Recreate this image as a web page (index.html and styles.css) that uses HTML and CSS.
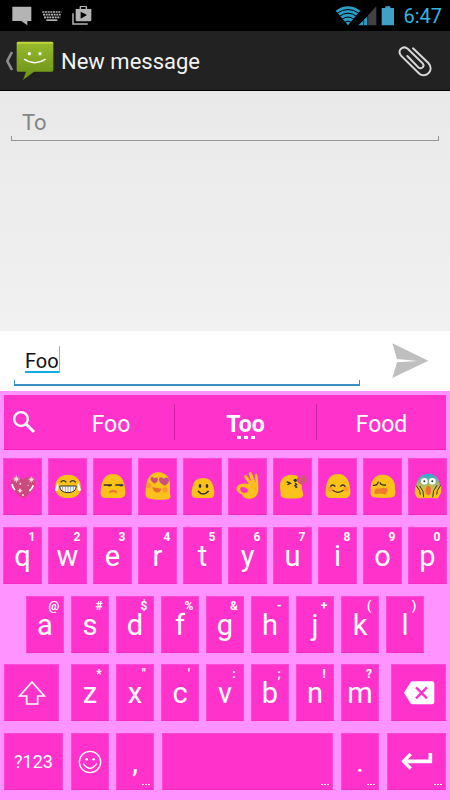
FILE: index.html
```html
<!DOCTYPE html>
<html lang="en">
<head>
<meta charset="utf-8">
<meta name="viewport" content="width=device-width, initial-scale=1">
<title>New message</title>
<link rel="stylesheet" href="styles.css">
</head>
<body>
<div class="screen">
  <div class="status">
    <svg width="20" height="20" viewBox="0 0 60 60"><path fill="#b4b4b4" d="M1 2h57v43H46v13L28 45H1z"/></svg>
    <svg width="20" height="20" viewBox="0 0 60 60"><path stroke="#b4b4b4" stroke-width="5" fill="none" d="M1 18h57M3 26h53M6 34h49" stroke-dasharray="6 2"/><path fill="#b4b4b4" d="M13 40h33v5H13z"/></svg>
    <svg width="20" height="20" viewBox="0 0 60 60"><path fill="none" stroke="#b4b4b4" stroke-width="4.500" d="M3 22v32h44M25 10V4q0-3 3-3h12q3 0 3 3v6"/><path fill="#b4b4b4" fill-rule="evenodd" d="M11 9h47v33q0 4-4 4H15q-4 0-4-4zM26 17v21l19-11z"/></svg>
    <span class="spacer"></span>
    <svg width="42" height="20" viewBox="0 0 126 60"><path fill="#2b9cc6" d="M2 14Q39-12 76 14L39 58z"/><g fill="none" stroke="#000" stroke-width="3"><path d="M6 22q33-23 66 0M13 31q26-19 52 0M21 40q18-14 36 0M29 49q10-8 20 0"/></g><path fill="#424242" d="M124 1v57H98V29z"/><path fill="#2b9cc6" d="M98 30v28H70z"/><path stroke="#000" stroke-width="2" d="M86 41v18M98 29v30"/></svg>
    <svg class="battery" width="14" height="20" viewBox="0 0 42 60"><path fill="#429fc5" d="M2 6h11V1h15v5h11v52H2z"/></svg>
    <time class="clock">6:47</time>
  </div>

  <header class="appbar">
    <button class="up" type="button" aria-label="Back">
      <svg width="10" height="20" viewBox="0 0 30 60"><path fill="none" stroke="#8c8c8c" stroke-width="8" d="M24 3 10 30l14 27"/></svg>
      <svg width="38" height="40" viewBox="0 0 114 120">
        <defs><linearGradient id="leaf" x2="0" y2="1"><stop offset="0" stop-color="#96bb2b"/><stop offset="1" stop-color="#6b8f17"/></linearGradient></defs>
        <path fill="url(#leaf)" d="M6 3h102q4 0 4 4v81q0 4-4 4H54L21 117l9-25H6q-4 0-4-4V7q0-4 4-4z"/>
        <path fill="#c0d63c" d="M6 2h102q4 0 4 6H2q0-6 4-6z"/>
        <circle cx="40" cy="38" r="5" fill="#fff"/><circle cx="72" cy="38" r="5" fill="#fff"/>
        <path d="M24 54q32 22 65 0" fill="none" stroke="#fff" stroke-width="4.500"/>
      </svg>
    </button>
    <h1 class="title">New message</h1>
    <button class="attach" type="button" aria-label="Attach">
      <svg width="34" height="32" viewBox="0 0 102 96"><path fill="none" stroke="#d8d8d8" stroke-width="6" stroke-linecap="round" d="M45 10 91 54C99 63 100 75 93 83S73 94 64 86L9 32C3 25 3 16 9 11S23 6 30 12L74 55C78 60 77 64 74 67S65 71 61 67L28 33"/></svg>
    </button>
  </header>

  <main class="thread">
    <div class="field to"><input type="text" placeholder="To" aria-label="To"></div>
  </main>

  <div class="compose">
    <div class="field draft"><input type="text" value="Foo" aria-label="Message"><i class="composing"></i></div>
    <button class="send" type="button" aria-label="Send"><svg width="38" height="36" viewBox="0 0 114 108"><path fill="#bfbfbf" d="M1 1 109 53 1 105 15 58 78 54 15 48z"/></svg></button>
  </div>

  <section class="keyboard" aria-label="Keyboard">
    <div class="strip">
      <button type="button" aria-label="Search"><svg width="24" height="24" viewBox="0 0 72 72"><circle cx="27" cy="27" r="20.500" fill="none" stroke="#fff" stroke-width="7"/><path d="M42 42 66 66" stroke="#fff" stroke-width="9"/></svg></button>
      <button type="button">Foo</button>
      <button type="button" class="best">Too<i class="dots"></i></button>
      <button type="button">Food</button>
    </div>

    <div class="row ten emoji">
      <button class="key" type="button" aria-label="Sparkling heart"><svg viewBox="0 0 90 90"><path fill="#cb4a7c" d="M45 84C30 76 7 56 8 36 10 18 34 14 45 31 55 14 80 18 82 36 83 56 61 76 45 84z"/><g stroke="#fff" stroke-width="2" fill="none"><path d="M14 27h22M25 16v22M18 20l14 14M32 20 18 34M61 29h18M70 20v18M64 23l12 12M76 23 64 35M29 62h14M36 55v14"/><path d="M12 42q2 11 9 18M76 46q-4 11-12 17" stroke-width="5"/></g><g fill="#fbdce8"><circle cx="25" cy="27" r="5"/><circle cx="70" cy="29" r="4"/><circle cx="36" cy="62" r="4"/><circle cx="37" cy="41" r="3"/><circle cx="45" cy="75" r="3"/><circle cx="60" cy="46" r="2"/></g></svg></button>
      <button class="key" type="button" aria-label="Tears of joy"><svg viewBox="0 0 90 90"><path fill="#fcc21b" d="M45 14c27 0 38 18 38 36 0 21-10 34-38 34S7 71 7 50c0-18 11-36 38-36z"/><path d="M23 37q8-10 17 0M51 37q8-10 17 0" fill="none" stroke="#2f2f2f" stroke-width="4"/><path d="M20 48h50q-1 20-25 20T20 48z" fill="#fff" stroke="#2f2f2f" stroke-width="3"/><path d="M29 49v14M37 49v18M45 49v18M53 49v18M61 49v14" stroke="#777" stroke-width="2"/><path fill="#fff" d="M15 38q5 22-6 26-7-3 6-26zm60 0q-5 22 6 26 7-3-6-26z"/></svg></button>
      <button class="key" type="button" aria-label="Unamused"><svg viewBox="0 0 90 90"><path fill="#fcc21b" d="M45 12c26 0 35 20 37 52 1 13-5 19-13 20H21C10 83 6 75 8 64c2-32 11-52 37-52z"/><path d="M17 45h25M52 45h24" stroke="#2f2f2f" stroke-width="4"/><path d="M28 45h12q-6 9-12 0zm35 0h12q-6 9-12 0z" fill="#2f2f2f"/><path d="M33 67q12-12 24 0-12-4-24 0z" fill="#ef7138" stroke="#ef7138" stroke-width="3"/></svg></button>
      <button class="key" type="button" aria-label="Heart eyes"><svg viewBox="0 0 90 90"><path fill="#fcc21b" d="M46 7c26 0 35 20 35 40v27q5 6-3 13-31 6-63-2-10-4-7-23C9 30 20 7 46 7z"/><g fill="#c9507f"><path d="M35 41Q20 32 23 24q5-7 10 1 9-6 12 2 1 8-10 14zM66 47Q47 40 48 27q4-10 14-1 10-8 16 3 1 9-12 18z"/></g><g fill="#f79a32"><circle cx="17" cy="47" r="8"/><circle cx="66" cy="60" r="8"/></g><path d="M28 51q14 4 27 5-3 14-16 11-9-3-11-16z" fill="#ed6c30"/></svg></button>
      <button class="key" type="button" aria-label="Smile"><svg viewBox="0 0 90 90"><path fill="#fcc21b" d="M45 24c25 0 32 18 34 44 0 11-5 15-12 16H23c-9-1-13-6-12-16 2-26 9-44 34-44z"/><ellipse cx="36" cy="48" rx="4" ry="6" fill="#2f2f2f"/><ellipse cx="57" cy="48" rx="4" ry="6" fill="#2f2f2f"/><path d="M30 63q15 18 32 0" fill="none" stroke="#2f2f2f" stroke-width="5"/></svg></button>
      <button class="key" type="button" aria-label="OK hand"><svg viewBox="0 0 90 90"><path fill="#fcc21b" fill-rule="evenodd" d="M48 42 34 22q-2-8 6-7l16 22-9-26q2-8 9-3l12 30-3-24q5-6 8 0 4 25 3 48-4 24-29 25-16-1-20-14Q13 69 10 58q0-15 20-17 11-1 18 1zM25 51q-8 7 2 16 12 6 19-4-4-13-21-12z"/><path d="M60 41q-4 8-2 16M69 50l-3 10" fill="none" stroke="#ed9f2f" stroke-width="2"/></svg></button>
      <button class="key" type="button" aria-label="Blowing a kiss"><svg viewBox="0 0 90 90"><path fill="#fcc21b" d="M41 14c22 0 33 18 30 41l5 18q-1 10-9 11-27 3-49 0-12-2-10-17Q-3 17 41 14z"/><path d="M26 35l11 5-9 4M51 39l5 5-5 3 5 4-4 2" fill="none" stroke="#2f2f2f" stroke-width="4"/><circle cx="52" cy="31" r="5" fill="#2f2f2f"/><path fill="#d7557c" d="M69 44Q53 35 57 25q5-7 11-1 4-15 13-7 3 4 1 8 9 2 5 9-6 7-18 10z"/></svg></button>
      <button class="key" type="button" aria-label="Blush"><svg viewBox="0 0 90 90"><path fill="#fcc21b" d="M45 12c26 0 35 20 37 52 1 13-5 19-13 20H21C10 83 6 75 8 64c2-32 11-52 37-52z"/><circle cx="22" cy="57" r="8" fill="#faa12b"/><circle cx="68" cy="57" r="8" fill="#faa12b"/><path d="M22 50q7-10 15 0M52 50q8-10 15 0M29 61q16 12 32 0" fill="none" stroke="#2f2f2f" stroke-width="4"/></svg></button>
      <button class="key" type="button" aria-label="Weary"><svg viewBox="0 0 90 90"><path fill="#fcc21b" d="M43 14c27 0 40 19 38 43q5 20-7 25-27 4-57 0-12-4-9-19C6 33 19 14 43 14z"/><path d="M15 46q13 2 16-11M36 37q2 10 18 8" fill="none" stroke="#2f2f2f" stroke-width="4"/><path fill="#f27a30" d="M20 62q3-11 13-6 12-4 22-2 10 6 0 14 4 7-9 4-12-3-22 1-7-2-4-11z"/></svg></button>
      <button class="key" type="button" aria-label="Scream"><svg viewBox="0 0 90 90"><defs><linearGradient id="fear" x2="0" y2="1"><stop offset="0" stop-color="#21a9dc"/><stop offset=".550" stop-color="#c8bd4c"/><stop offset="1" stop-color="#fcc21b"/></linearGradient></defs><path fill="url(#fear)" d="M45 11c27 0 36 19 37 48q-1 23-16 25H24Q8 81 8 59 10 13 45 11z"/><circle cx="34" cy="34" r="10" fill="#fff"/><circle cx="58" cy="34" r="10" fill="#fff"/><circle cx="34" cy="34" r="3" fill="#2f2f2f"/><circle cx="58" cy="34" r="3" fill="#2f2f2f"/><ellipse cx="46" cy="61" rx="8" ry="14" fill="#ef6c35"/><path fill="#fcc21b" d="M7 45l9 12 10-2 8 30H13L5 68zM85 45l-9 12-8-2-10 30h17l9-17z"/><path fill="none" stroke="#33332b" stroke-width="3" d="M9 46l11 16 2 12M20 48l10 16 2 18M83 46 73 62l-2 12M72 46 62 62l-3 20"/></svg></button>
    </div>

    <div class="row ten">
      <button class="key" type="button">q<sup>1</sup></button><button class="key" type="button">w<sup>2</sup></button><button class="key" type="button">e<sup>3</sup></button><button class="key" type="button">r<sup>4</sup></button><button class="key" type="button">t<sup>5</sup></button><button class="key" type="button">y<sup>6</sup></button><button class="key" type="button">u<sup>7</sup></button><button class="key" type="button">i<sup>8</sup></button><button class="key" type="button">o<sup>9</sup></button><button class="key" type="button">p<sup>0</sup></button>
    </div>

    <div class="row nine">
      <button class="key" type="button">a<sup>@</sup></button><button class="key" type="button">s<sup>#</sup></button><button class="key" type="button">d<sup>$</sup></button><button class="key" type="button">f<sup>%</sup></button><button class="key" type="button">g<sup>&amp;</sup></button><button class="key" type="button">h<sup>-</sup></button><button class="key" type="button">j<sup>+</sup></button><button class="key" type="button">k<sup>(</sup></button><button class="key" type="button">l<sup>)</sup></button>
    </div>

    <div class="row outer">
      <button class="key" type="button" aria-label="Shift"><svg width="30" height="26" viewBox="0 0 90 78"><path fill="none" stroke="#fff" stroke-width="5" d="M45 6 82 48H62v24H29V48H8z"/></svg></button>
      <div class="letters">
        <button class="key" type="button">z<sup>*</sup></button><button class="key" type="button">x<sup>"</sup></button><button class="key" type="button">c<sup>'</sup></button><button class="key" type="button">v<sup>:</sup></button><button class="key" type="button">b<sup>;</sup></button><button class="key" type="button">n<sup>!</sup></button><button class="key" type="button">m<sup>?</sup></button>
      </div>
      <button class="key" type="button" aria-label="Delete"><svg width="32" height="24" viewBox="0 0 96 72"><path fill="#fff" d="M29 1h58q7 0 7 7v55q0 7-7 7H29q-4 0-7-4L3 35 22 5q3-4 7-4z"/><path stroke="#ff33cc" stroke-width="7" d="m39 19 33 33M72 19 39 52"/></svg></button>
    </div>

    <div class="row bottom">
      <button class="key symbols" type="button">?123</button>
      <div class="pair">
        <button class="key" type="button" aria-label="Emoji"><svg width="24" height="24" viewBox="0 0 72 72"><circle cx="36" cy="36" r="32" fill="none" stroke="#fff" stroke-width="4"/><circle cx="26" cy="28" r="4" fill="#fff"/><circle cx="47" cy="28" r="4" fill="#fff"/><path d="M16 41q20 28 40 0" fill="none" stroke="#fff" stroke-width="4"/></svg></button>
        <button class="key more" type="button">,</button>
      </div>
      <button class="key more" type="button" aria-label="Space"></button>
      <button class="key more" type="button">.</button>
      <button class="key more" type="button" aria-label="Enter"><svg width="32" height="20" viewBox="0 0 96 60"><path fill="none" stroke="#fff" stroke-width="11" d="M88 3v25H12"/><path fill="none" stroke="#fff" stroke-width="10" d="M29 6 8 28l21 22"/></svg></button>
    </div>
  </section>
</div>
</body>
</html>
```
FILE: styles.css
```css
* { box-sizing: border-box; }

body {
  margin: 0;
  font-family: Roboto, "Liberation Sans", sans-serif;
  background: #ff93ff;
}

button, input {
  font: inherit;
  color: inherit;
  margin: 0;
  padding: 0;
  border: 0;
  background: none;
}

svg { display: block; }

.screen {
  display: flex;
  flex-direction: column;
  min-height: 100vh;
}

/* Status bar */
.status {
  display: flex;
  align-items: center;
  gap: 10px;
  height: 31px;
  padding: 0 8px 0 12px;
  background: #000;
}
.spacer { flex: 1; }
.battery { margin-left: -6px; }
.clock {
  font-size: 20px;
  line-height: 30px;
  color: #33b5e5;
  margin-left: -2px;
}

/* App bar */
.appbar {
  display: flex;
  align-items: center;
  height: 60px;
  padding: 0 18px 0 4px;
  background: #222;
  border-bottom: 1px solid #000;
  color: #f3f3f3;
}
.up {
  display: flex;
  align-items: center;
  gap: 2px;
}
.title {
  flex: 1;
  margin: 0 0 0 7px;
  padding-top: 2px;
  font-size: 22px;
  line-height: 28px;
  font-weight: 400;
}

/* Recipient and thread */
.thread {
  flex: 1;
  padding: 12px 11px;
  background: linear-gradient(#e9e9e9, #f1f1f1);
}
.field {
  position: relative;
  border-bottom: 1px solid #969696;
}
.field::after {
  content: "";
  position: absolute;
  inset: auto 0 0;
  height: 4px;
  border: solid #969696;
  border-width: 0 1px;
}
.field input {
  display: block;
  width: 100%;
  outline: 0;
}
.to input {
  height: 37px;
  padding: 2px 0 0 11px;
  font-size: 22px;
}
.to input::placeholder { color: #858585; opacity: 1; }

/* Compose */
.compose {
  display: flex;
  align-items: flex-start;
  height: 60px;
  padding: 12px 20px 0 14px;
  background: #fff;
}
.draft {
  flex: 1;
  border-bottom: 2px solid #3a92c0;
}
.draft::after { border-color: #3a92c0; }
.draft input {
  height: 41px;
  padding: 0 0 6px 11px;
  font-size: 20px;
  color: #111;
}
/* Underline of the word being composed, with the caret at its end */
.composing {
  position: absolute;
  left: 11px;
  top: 3px;
  width: 35px;
  height: 27px;
  border-right: 1px solid #aaa;
  background: linear-gradient(#14ade0, #14ade0) 0 25px / 34px 2px no-repeat;
}
.send { margin-left: 32px; }

/* Keyboard */
.keyboard {
  display: grid;
  gap: 12px;
  padding: 4px 0 10px;
  background: #ff93ff;
  color: #fff;
}
.strip {
  display: grid;
  grid-template-columns: 44px 126fr 143fr 129fr;
  height: 55px;
  margin: 0 4px -4px;
  background: #ff33cc;
  border-bottom: 1px solid #f21fbd;
  font-size: 23px;
}
.strip button {
  position: relative;
  display: grid;
  place-items: center;
  padding-top: 4px;
}
.strip button:first-child { justify-content: start; padding-left: 8px; padding-top: 0; }
.best { font-weight: 700; }
.best::before, .best::after {
  content: "";
  position: absolute;
  top: 9px;
  bottom: 9px;
  left: 0;
  width: 1px;
  background: #c526a0;
}
.best::after { left: auto; right: 0; }
.dots {
  position: absolute;
  left: calc(50% - 9px);
  bottom: 10px;
  width: 18px;
  height: 3px;
  background: repeating-linear-gradient(90deg, #fff 0 4px, transparent 4px 7px);
}

.row { display: grid; height: 57px; }
.ten { grid-template-columns: repeat(10, 1fr); gap: 6px; padding: 0 3px; }
.nine { grid-template-columns: repeat(9, 1fr); gap: 7px; padding: 0 26px; }
.outer {
  grid-template-columns: 55fr 308fr 55fr;
  gap: 12px;
  margin-top: -1px;
  padding: 0 4px;
}
.letters { display: grid; grid-template-columns: repeat(7, 1fr); gap: 7px; }
.bottom { grid-template-columns: 59fr 83fr 171fr 38fr 59fr; gap: 8px; padding: 0 4px; }
.pair { display: grid; grid-template-columns: 1fr 1fr; gap: 7px; }

.key {
  position: relative;
  display: grid;
  place-items: center;
  min-width: 0;
  background: #ff33cc;
  border: 1px solid #ff49d5;
  border-bottom-color: #f72bc6;
  font-size: 29px;
  line-height: 26px;
}
.key sup {
  position: absolute;
  top: 4px;
  right: -1px;
  width: 20px;
  font-size: 12px;
  line-height: 10px;
  font-weight: 700;
  text-align: center;
}
.emoji .key { padding-bottom: 3px; }
.emoji svg { width: 30px; height: 30px; }
.key.symbols { font-size: 18px; }
.more::after {
  content: "";
  position: absolute;
  right: 3px;
  bottom: 4px;
  width: 8px;
  height: 1px;
  background: repeating-linear-gradient(90deg, #fff 0 2px, transparent 2px 3px);
}
```
